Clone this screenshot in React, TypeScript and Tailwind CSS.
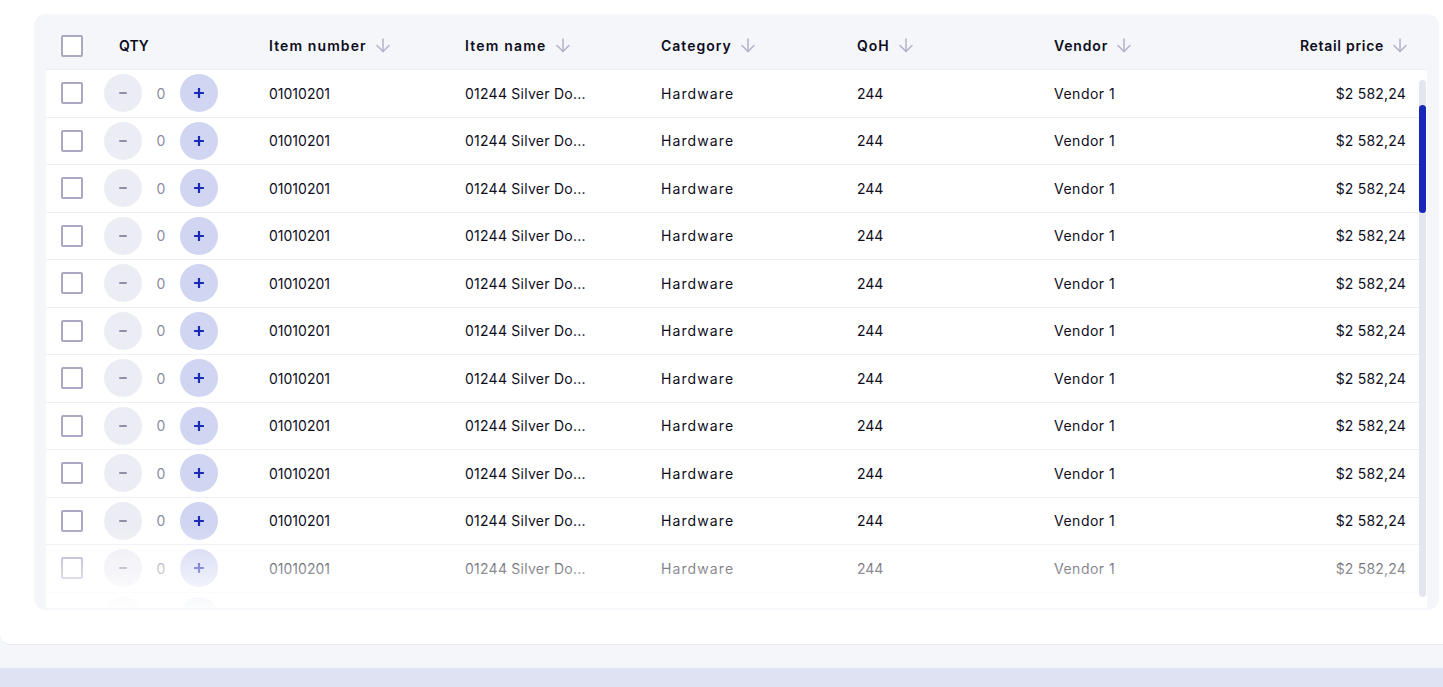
import React from "react";

const SortArrow = () => (
  <svg width="14" height="15" viewBox="0 0 14 15" fill="none" className="shrink-0">
    <path d="M7 1v12.5" stroke="#b3b1cb" strokeWidth="1.5" strokeLinecap="round" />
    <path d="M1 7.5l6 6 6-6" stroke="#b3b1cb" strokeWidth="1.5" strokeLinecap="round" strokeLinejoin="round" />
  </svg>
);

const Checkbox = () => (
  <div className="w-[22px] h-[22px] rounded-[2px] border-2 border-[#aaa8c3] bg-white shrink-0" />
);

const HeaderCell = ({ label, className, track }: { label: string; className: string; track: string }) => (
  <div className={`flex items-center gap-[9px] ${className}`}>
    <span className={track}>{label}</span>
    <SortArrow />
  </div>
);

const Stepper = ({ showValue = true }: { showValue?: boolean }) => (
  <div className="w-[165px] shrink-0 flex items-center">
    <div className="w-[38px] h-[38px] rounded-full bg-[#ececf4] flex items-center justify-center">
      <span className="w-[8px] h-[2px] rounded-full bg-[#8f8fa9]" />
    </div>
    <div className="w-[38px] text-center text-[#8b8ba3]">{showValue ? "0" : ""}</div>
    <div className="w-[38px] h-[38px] rounded-full bg-[#d0d5f1] flex items-center justify-center">
      <svg width="10" height="10" viewBox="0 0 10 10">
        <path d="M5 0.8v8.4M0.8 5h8.4" stroke="#1b2bb7" strokeWidth="2.2" strokeLinecap="round" />
      </svg>
    </div>
  </div>
);

const Row = () => (
  <div className="h-[47.5px] shrink-0 border-b border-[#eeeef5] flex items-center text-[14px] text-[#0d0d1c]">
    <div className="w-[58px] pl-[15px] shrink-0 flex items-center">
      <Checkbox />
    </div>
    <Stepper />
    <div className="w-[196px] shrink-0">01010201</div>
    <div className="w-[196px] shrink-0 tracking-[0.25px]">01244 Silver Do...</div>
    <div className="w-[196px] shrink-0 tracking-[1.1px]">Hardware</div>
    <div className="w-[197px] shrink-0">244</div>
    <div className="w-[120px] shrink-0 tracking-[0.5px]">Vendor 1</div>
    <div className="flex-1 text-right pr-[13px] tracking-[0.2px]">$2 582,24</div>
  </div>
);

const PartialRow = () => (
  <div className="h-[47.5px] shrink-0 flex items-center text-[14px]">
    <div className="w-[58px] shrink-0" />
    <Stepper showValue={false} />
  </div>
);

export default function App() {
  const rows = Array.from({ length: 11 });
  return (
    <div className="w-[1443px] h-[687px] bg-[#f5f6fa] flex flex-col overflow-hidden font-['Inter',sans-serif]">
      <div className="h-[645px] shrink-0 bg-white rounded-bl-[10px] border-b border-[#e7e8f0] pl-[34px] pr-[4px] pt-[14px]">
        <div className="h-[596px] rounded-[12px] bg-[#f5f6fa] px-[12px] pb-[2px] flex flex-col">
          <div className="h-[56px] shrink-0 border-b border-[#e9eaf2] pt-[8px] flex items-center text-[14px] font-semibold text-[#0d0d1c]">
            <div className="w-[58px] pl-[15px] shrink-0 flex items-center">
              <Checkbox />
            </div>
            <div className="w-[165px] shrink-0 pl-[15px]">QTY</div>
            <HeaderCell label="Item number" track="tracking-[1.1px]" className="w-[196px] shrink-0" />
            <HeaderCell label="Item name" track="tracking-[1.2px]" className="w-[196px] shrink-0" />
            <HeaderCell label="Category" track="tracking-[1px]" className="w-[196px] shrink-0" />
            <HeaderCell label="QoH" track="tracking-[1px]" className="w-[197px] shrink-0" />
            <HeaderCell label="Vendor" track="tracking-[0.85px]" className="w-[120px] shrink-0" />
            <HeaderCell label="Retail price" track="tracking-[0.7px]" className="flex-1 justify-end pr-[20px]" />
          </div>
          <div className="flex-1 bg-white flex overflow-hidden">
            <div className="flex-1 flex flex-col overflow-hidden relative">
              {rows.map((_, i) => (
                <Row key={i} />
              ))}
              <PartialRow />
              <div className="absolute inset-x-0 bottom-0 h-[80px] bg-linear-to-b from-white/0 to-white/95 pointer-events-none" />
            </div>
            <div className="w-[8px] shrink-0 pt-[10px] pb-[11px] pr-[1px]">
              <div className="h-full w-[7px] rounded-full bg-[#e5e5ef] pt-[25px]">
                <div className="h-[108px] w-[7px] rounded-full bg-[#1727b8]" />
              </div>
            </div>
          </div>
        </div>
      </div>
      <div className="h-[23px] shrink-0" />
      <div className="flex-1 bg-[#dfe2f3]" />
    </div>
  );
}
